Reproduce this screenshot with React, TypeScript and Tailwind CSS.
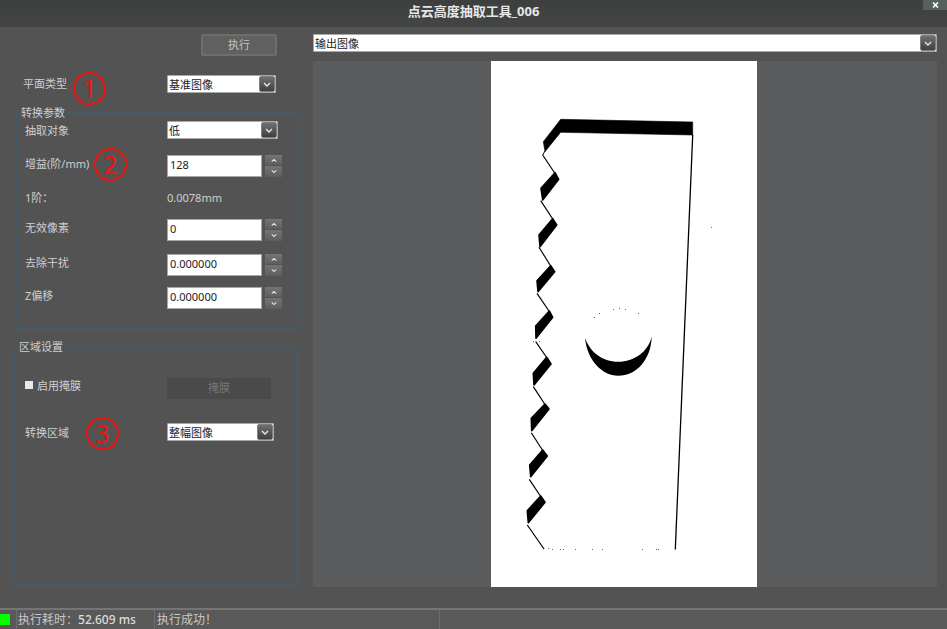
import type { ReactNode } from "react";

const font = "font-['Noto_Sans','Noto_Sans_CJK_SC',sans-serif]";

function Arrow({ up }: { up?: boolean }) {
  return (
    <svg width="8" height="5" viewBox="0 0 8 5" className={up ? "rotate-180" : ""}>
      <path d="M1 1 L4 4 L7 1" fill="none" stroke="#e8e8e8" strokeWidth="1.4" />
    </svg>
  );
}

function Combo({ value, className }: { value: string; className: string }) {
  return (
    <div className={`flex h-[18px] items-center justify-between rounded-[1px] border border-[#a8a8a8] bg-white pl-[1px] ${className}`}>
      <span className="text-[11px] leading-none text-[#222]">{value}</span>
      <div className="flex h-[16px] w-[16px] items-center justify-center rounded-[2px] border border-[#808080] bg-gradient-to-b from-[#707070] to-[#404040]">
        <Arrow />
      </div>
    </div>
  );
}

function Spin({ value }: { value: string }) {
  return (
    <div className="flex items-center">
      <div className="flex h-[22px] w-[95px] items-start border border-[#a8a8a8] bg-white pl-[2px] pt-[2px] text-[11px] leading-[14px] text-[#222]">
        {value}
      </div>
      <div className="ml-[3px] flex flex-col gap-[1px]">
        <div className="flex h-[10px] w-[17px] items-center justify-center bg-gradient-to-b from-[#747474] to-[#5e5e5e]">
          <div className="scale-75">
            <Arrow up />
          </div>
        </div>
        <div className="flex h-[11px] w-[17px] items-center justify-center bg-gradient-to-b from-[#747474] to-[#5e5e5e]">
          <div className="scale-75">
            <Arrow />
          </div>
        </div>
      </div>
    </div>
  );
}

function Row({ label, lift = true, className, children }: { label: string; lift?: boolean; className?: string; children: ReactNode }) {
  return (
    <div className={`flex items-center ${className ?? ""}`}>
      <span className={`w-[150px] pl-[8px] text-[11px] leading-none ${lift ? "pb-[5px]" : ""}`}>{label}</span>
      {children}
    </div>
  );
}

function Mark({ n, className }: { n: string; className: string }) {
  return (
    <div className={`absolute flex h-[33px] w-[33px] items-center justify-center rounded-full border-2 border-[#f01410] text-[25px] leading-none text-[#f01410] ${className}`}>
      {n}
    </div>
  );
}

function Legend({ className, children }: { className: string; children: string }) {
  return (
    <span className={`absolute left-[3px] bg-[#535353] px-[1px] text-[11px] leading-[14px] ${className}`}>
      {children}
    </span>
  );
}

function Teeth() {
  const teeth = [
    "555,172.7 558.7,179.3 542.7,200 541,188.3",
    "552.7,218.7 556.7,225 540,246.7 539,235",
    "550.7,265.7 554.7,271.7 538,291.7 537,280.7",
    "549.3,311 552.7,317.3 536,338.3 535.7,326",
    "546.7,357.3 551,364 534,385 533.3,373.3",
    "545,404 549,409 531.7,430.7 531.3,418.3",
    "542.7,450 547.3,456 530.7,476.7 529.7,465",
    "540.7,496 545,502.3 528.3,522.7 527.3,510.7",
  ];
  const lines = [
    "542.7,155 555,173.5",
    "540.7,200.7 552.7,219",
    "539,247.3 550.7,266",
    "537,293.3 549.3,311.5",
    "535.7,341.7 546.7,357.5",
    "533.3,386.7 545,404.5",
    "531.3,432.7 542.7,450.5",
    "529.3,479.3 540.7,496.5",
    "527.3,525 544,549",
  ];
  const dots = [
    [594, 317], [599, 313], [613, 309], [619, 308], [625, 309], [638, 313], [711, 227],
    [548, 548], [552, 549], [560, 549], [563, 549], [575, 549], [592, 549], [602, 549], [642, 549], [656, 549], [658, 549],
    [533, 341], [539, 341],
  ];
  return (
    <svg viewBox="491 61 266 526" className="h-[526px] w-[266px] bg-white">
      <polygon
        points="560.7,119.3 692.7,122 692.7,135 560.7,132.3 545,151.7 543.3,141.7"
        fill="#000"
        stroke="#000"
        strokeWidth="0.6"
      />
      <line x1="545" y1="151" x2="542.7" y2="155" stroke="#000" strokeWidth="1" />
      {teeth.map((p) => (
        <polygon key={p} points={p} fill="#000" stroke="#000" strokeWidth="1.6" strokeLinejoin="round" />
      ))}
      {lines.map((l) => (
        <polyline key={l} points={l} fill="none" stroke="#000" strokeWidth="1.2" />
      ))}
      <path d="M692.7 135 L675.3 549.5" stroke="#000" strokeWidth="1.3" fill="none" />
      <path
        d="M585 337.7 C587 360 602 375.7 618.3 375.7 C636 375.7 651 360 651.7 336.7 C648 352 634 361.7 618.3 361.7 C602 361.7 590 352 585 337.7 Z"
        fill="#000"
      />
      {dots.map(([x, y]) => (
        <rect key={`${x}-${y}`} x={x} y={y} width="1" height="1" fill="#666" />
      ))}
    </svg>
  );
}

export default function App() {
  return (
    <div className={`flex h-[629px] w-[947px] flex-col overflow-hidden bg-[#535353] text-[#cfcfcf] ${font}`}>
      <div className="relative flex h-[27px] shrink-0 items-center justify-center bg-gradient-to-b from-[#3d3f3e] to-[#444645] pb-[4px]">
        <span className="text-[13px] font-bold leading-none text-[#e6e6e6]">点云高度抽取工具_006</span>
        <div className="absolute right-0 top-0 flex h-[10px] w-[24px] items-center justify-center bg-[#56605f]">
          <svg width="7" height="6" viewBox="0 0 7 6">
            <path d="M1 0.5 L6 5.5 M6 0.5 L1 5.5" stroke="#fff" strokeWidth="1.6" fill="none" />
          </svg>
        </div>
      </div>

      <div className="flex min-h-0 flex-1">
        <div className="relative w-[313px] shrink-0">
          <div className="ml-[201px] mt-[7px] flex h-[22px] w-[76px] items-center justify-center rounded-[2px] border-2 border-[#6d6d6d] bg-[#606060] text-[11px] text-[#c4c4c4]">
            执行
          </div>
          <div className="ml-[14px] mt-[19px] flex">
            <span className="w-[153px] pl-[9px] pt-[1px] text-[11px] leading-[16px]">平面类型</span>
            <Combo value="基准图像" className="w-[109px]" />
          </div>
          <Mark n="1" className="left-[73px] top-[45px]" />

          <div className="relative ml-[15px] mt-[19px] h-[218px] w-[285px] rounded-[2px] border-2 border-[#465a66]">
            <Legend className="top-[-8px]">转换参数</Legend>
            <div className="flex flex-col pt-[7px]">
              <Row label="抽取对象" lift={false}>
                <Combo value="低" className="w-[111px]" />
              </Row>
              <Row label="增益(阶/mm)" className="mt-[16px]">
                <Spin value="128" />
              </Row>
              <Row label="1阶：" lift={false} className="mt-[13px]">
                <span className="text-[11px] leading-[15px]">0.0078mm</span>
              </Row>
              <Row label="无效像素" className="mt-[14px]">
                <Spin value="0" />
              </Row>
              <Row label="去除干扰" className="mt-[13px]">
                <Spin value="0.000000" />
              </Row>
              <Row label="Z偏移" className="mt-[11px]">
                <Spin value="0.000000" />
              </Row>
            </div>
          </div>
          <Mark n="2" className="left-[94px] top-[121px]" />

          <div className="relative ml-[13px] mt-[17px] h-[239px] w-[285px] rounded-[2px] border-2 border-[#465a66]">
            <Legend className="top-[-9px]">区域设置</Legend>
            <div className="flex items-center pl-[10px] pt-[29px]">
              <div className="mb-[7px] h-[8px] w-[8px] bg-[#e4e8f0]" />
              <span className="mb-[7px] ml-[4px] w-[130px] text-[11px] leading-none">启用掩膜</span>
              <div className="flex h-[21px] w-[104px] items-center justify-center bg-[#4a4a4a] text-[11px] text-[#777]">
                掩膜
              </div>
            </div>
            <div className="mt-[24px] flex items-center">
              <span className="w-[152px] pl-[10px] text-[11px] leading-none">转换区域</span>
              <Combo value="整幅图像" className="w-[107px]" />
            </div>
          </div>
          <Mark n="3" className="left-[86px] top-[390px]" />
        </div>

        <div className="flex flex-1 flex-col">
          <div className="mr-[10px] mt-[7px]">
            <Combo value="输出图像" className="w-[624px]" />
          </div>
          <div className="mr-[10px] mt-[9px] flex h-[526px] justify-center bg-[#5b5c5d] pr-[2px]">
            <Teeth />
          </div>
        </div>
      </div>

      <div className="flex h-[21px] shrink-0 items-center border-t-2 border-[#757575] bg-[#595959] text-[12px] leading-none text-[#c8c8c8]">
        <div className="h-[11px] w-[10px] bg-[#00ff00]" />
        <div className="ml-[6px] flex h-full w-[138px] items-center border-l border-[#6e6e6e] pl-[1px]">
          <span>执行耗时：</span>
          <span className="font-medium text-[#dcdcdc]">52.609 ms</span>
        </div>
        <div className="flex h-full w-[286px] items-center border-x border-[#6e6e6e] pl-[2px]">执行成功！</div>
      </div>
    </div>
  );
}
